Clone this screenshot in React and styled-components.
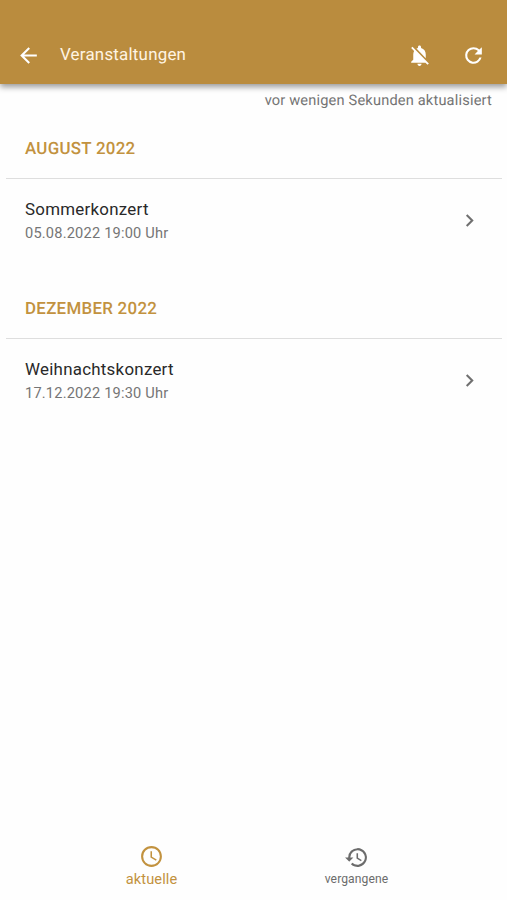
import React, { useState } from 'react';
import styled, { createGlobalStyle } from 'styled-components';

const GlobalStyle = createGlobalStyle`
  * {
    box-sizing: border-box;
  }
  body {
    margin: 0;
    background: #fefefe;
    font-family: Roboto, "Liberation Sans", sans-serif;
    text-rendering: geometricPrecision;
  }
  button {
    padding: 0;
    border: none;
    background: none;
    color: inherit;
    font: inherit;
  }
`

const Page = styled.div`
  display: flex;
  flex-direction: column;
  height: 100vh;
`

const Toolbar = styled.header`
  display: flex;
  align-items: center;
  height: 84px;
  padding: 26px 21px 0 16px;
  color: #fff;
  background: #ba8c3e;
  box-shadow: 0 3px 6px rgba(0, 0, 0, 0.4);
`

const ToolbarButton = styled.button`
  display: flex;
  margin-left: ${props => props.$gap || 0}px;
`

const Title = styled.h1`
  flex: 1;
  margin: 0 0 0 19px;
  font-size: 16.9px;
  font-weight: 400;
  line-height: 24px;
  letter-spacing: 0.23px;
  color: #fff4e2;
`

const Updated = styled.p`
  margin: 7px 15px 0 0;
  font-size: 14.6px;
  line-height: 18px;
  letter-spacing: 0.18px;
  text-align: right;
  color: #747474;
`

const Content = styled.main`
  flex: 1;
`

const Month = styled.section`
  height: 160px;
  padding: 0 5px 0 6px;
`

const MonthTitle = styled.h2`
  height: 70px;
  margin: 0;
  padding: 28px 19px 0;
  border-bottom: 1px solid #dedede;
  font-size: 16.9px;
  font-weight: 500;
  line-height: 24px;
  letter-spacing: 0.28px;
  text-transform: uppercase;
  color: #c2923f;
`

const Event = styled.button`
  display: flex;
  align-items: center;
  justify-content: space-between;
  width: 100%;
  height: 82px;
  padding: 0 20px 0 19px;
  text-align: left;
`

const EventName = styled.div`
  padding-top: 1px;
  font-size: 16.9px;
  line-height: 24px;
  letter-spacing: 0.26px;
  color: #292929;
`

const EventDate = styled.div`
  font-size: 14.6px;
  line-height: 24px;
  letter-spacing: 0.2px;
  color: #757575;
`

const Navigation = styled.nav`
  display: flex;
  height: 58px;
  padding: 0 48px 0 49px;
`

const Tab = styled.button`
  display: flex;
  flex: 1;
  flex-direction: column;
  align-items: center;
  padding-top: ${props => props.$active ? 2 : 3}px;
  font-size: ${props => props.$active ? 14.6 : 12.1}px;
  line-height: ${props => props.$active ? 20 : 18}px;
  letter-spacing: 0.1px;
  color: ${props => props.$active ? '#c2923f' : '#6c6c6c'};
`

const StyledIcon = styled.svg`
  display: block;
  width: ${props => props.$size}px;
  height: ${props => props.$size}px;
  fill: currentColor;
  color: ${props => props.$color || 'inherit'};
`

const paths = {
  back: 'M20 11H7.83l5.59-5.59L12 4l-8 8 8 8 1.41-1.41L7.83 13H20v-2z',
  bellOff: 'M20 18.69L7.84 6.14 5.27 3.49 4 4.76l2.8 2.8v.01c-.52.99-.8 2.16-.8 3.42v5l-2 2v1h13.73l2 2L21 19.72l-1-1.03zM12 22c1.11 0 2-.89 2-2h-4c0 1.11.89 2 2 2zm6-7.32V11c0-3.08-1.64-5.64-4.5-6.32V4c0-.83-.67-1.5-1.5-1.5s-1.5.67-1.5 1.5v.68c-.51.11-.99.29-1.44.52L18 14.68z',
  refresh: 'M17.65 6.35A7.96 7.96 0 0 0 12 4a8 8 0 1 0 7.73 10h-2.08A6 6 0 1 1 12 6c1.66 0 3.14.69 4.22 1.78L13 11h7V4l-2.35 2.35z',
  chevron: 'M10 6 8.59 7.41 13.17 12l-4.58 4.59L10 18l6-6z',
  clock: 'M11.99 2C6.47 2 2 6.48 2 12s4.47 10 9.99 10C17.52 22 22 17.52 22 12S17.52 2 11.99 2zM12 20a8 8 0 1 1 0-16 8 8 0 0 1 0 16zm.5-13H11v6l5.25 3.15.75-1.23-4.5-2.67V7z',
  history: 'M13 3a9 9 0 0 0-9 9H1l3.89 3.89.07.14L9 12H6a7 7 0 1 1 2.06 4.94l-1.42 1.42A9 9 0 1 0 13 3zm-1 5v5l4.28 2.54.72-1.21-3.5-2.08V8H12z',
};

const Icon = ({ name, size = 25, color }) => (
  <StyledIcon viewBox="0 0 24 24" aria-hidden="true" $size={size} $color={color}>
    <path d={paths[name]} />
  </StyledIcon>
);

const months = [
  { title: 'August 2022', name: 'Sommerkonzert', date: '05.08.2022 19:00 Uhr' },
  { title: 'Dezember 2022', name: 'Weihnachtskonzert', date: '17.12.2022 19:30 Uhr' },
];

const tabs = [
  { label: 'aktuelle', icon: 'clock' },
  { label: 'vergangene', icon: 'history' },
];

const App = () => {
  const [tab, setTab] = useState('aktuelle');
  return (
    <Page>
      <GlobalStyle />
      <Toolbar>
        <ToolbarButton><Icon name="back" /></ToolbarButton>
        <Title>Veranstaltungen</Title>
        <ToolbarButton><Icon name="bellOff" /></ToolbarButton>
        <ToolbarButton $gap={29}><Icon name="refresh" /></ToolbarButton>
      </Toolbar>
      <Updated>vor wenigen Sekunden aktualisiert</Updated>
      <Content>
        {months.map(month => (
          <Month key={month.title}>
            <MonthTitle>{month.title}</MonthTitle>
            <Event>
              <div>
                <EventName>{month.name}</EventName>
                <EventDate>{month.date}</EventDate>
              </div>
              <Icon name="chevron" color="#707070" />
            </Event>
          </Month>
        ))}
      </Content>
      <Navigation>
        {tabs.map(({ label, icon }) => (
          <Tab key={label} $active={tab === label} onClick={() => setTab(label)}>
            <Icon name={icon} />
            {label}
          </Tab>
        ))}
      </Navigation>
    </Page>
  );
};

export default App;
